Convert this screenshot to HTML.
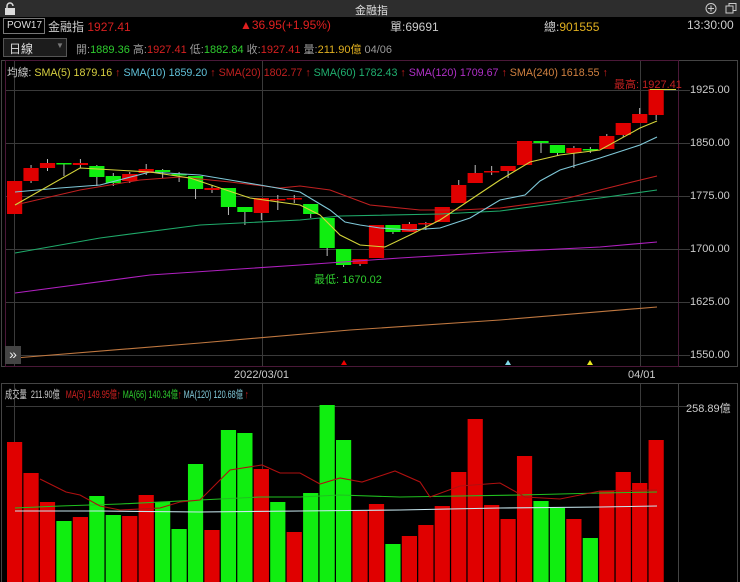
<!DOCTYPE html>
<html><head><meta charset="utf-8"><style>
body{margin:0;width:740px;height:582px;background:#000;overflow:hidden;font-family:"Liberation Sans","Noto Sans CJK TC",sans-serif;}
.t{position:absolute;white-space:nowrap;font-size:11px;}
</style></head><body>
<div style="position:absolute;left:0;top:0;width:740px;height:17px;background:#2d2d2d;"></div>
<div class="t" style="left:355px;top:2px;color:#ddd;">金融指</div>
<svg style="position:absolute;left:4px;top:2px" width="12" height="13"><path d="M3 6V4a3 3 0 0 1 6 0" stroke="#ddd" fill="none" stroke-width="1.5"/><rect x="1" y="6" width="10" height="7" fill="#ddd"/></svg>
<svg style="position:absolute;left:705px;top:2px" width="35" height="13"><circle cx="6" cy="6.5" r="5" stroke="#ccc" fill="none"/><path d="M6 3.5v6M3 6.5h6" stroke="#ccc"/><rect x="21" y="4" width="7" height="7" stroke="#ccc" fill="none"/><path d="M24 4V1.5h7v7h-3" stroke="#ccc" fill="none"/></svg>
<div style="position:absolute;left:3px;top:18px;width:40px;height:14px;border:1px solid #777;"></div>
<div class="t" style="left:7px;top:20px;color:#ddd;font-size:10px;">POW17</div>
<div class="t" style="left:48px;top:18px;font-size:12px;color:#ccc;">金融指 <span style="color:#d62020">1927.41</span></div>
<div class="t" style="left:240px;top:18px;font-size:12px;color:#e02020;">▲36.95(+1.95%)</div>
<div class="t" style="left:390px;top:18px;font-size:12px;color:#ccc;">單:69691</div>
<div class="t" style="left:544px;top:18px;font-size:12px;color:#ccc;">總:<span style="color:#e0b020">901555</span></div>
<div class="t" style="left:687px;top:18px;font-size:12px;color:#ccc;">13:30:00</div>
<div style="position:absolute;left:3px;top:38px;width:62px;height:17px;background:#1c1c1c;border:1px solid #555;"></div>
<div class="t" style="left:9px;top:40px;color:#ddd;font-size:12px;">日線</div>
<div class="t" style="left:56px;top:41px;color:#777;font-size:8px;">▼</div>
<div class="t" style="left:76px;top:41px;color:#999;font-size:11px;">開:<span style="color:#2ecc2e">1889.36</span> 高:<span style="color:#d62020">1927.41</span> 低:<span style="color:#2ecc2e">1882.84</span> 收:<span style="color:#d62020">1927.41</span> 量:<span style="color:#e0b020">211.90億</span> 04/06</div>
<svg id="s" style="position:absolute;left:0;top:0" width="740" height="582"></svg>
<div class="t" style="left:7px;top:65px;color:#ccc;font-size:10.7px;">均線: <span style="color:#d8d040">SMA(5) 1879.16</span> <span style="color:#d02020">↑</span> <span style="color:#60c0d8">SMA(10) 1859.20</span> <span style="color:#d02020">↑</span> <span style="color:#c02020">SMA(20) 1802.77</span> <span style="color:#d02020">↑</span> <span style="color:#20b070">SMA(60) 1782.43</span> <span style="color:#d02020">↑</span> <span style="color:#b030c8">SMA(120) 1709.67</span> <span style="color:#d02020">↑</span> <span style="color:#d08040">SMA(240) 1618.55</span> <span style="color:#d02020">↑</span></div>
<div class="t" style="left:614px;top:76px;color:#c02020;">最高: 1927.41</div>
<div class="t" style="left:314px;top:271px;color:#2ecc2e;">最低: 1670.02</div>
<div class="t" style="left:690px;top:84px;color:#ccc;">1925.00</div>
<div class="t" style="left:690px;top:137px;color:#ccc;">1850.00</div>
<div class="t" style="left:690px;top:190px;color:#ccc;">1775.00</div>
<div class="t" style="left:690px;top:243px;color:#ccc;">1700.00</div>
<div class="t" style="left:690px;top:296px;color:#ccc;">1625.00</div>
<div class="t" style="left:690px;top:349px;color:#ccc;">1550.00</div>
<div class="t" style="left:234px;top:369px;color:#ccc;">2022/03/01</div>
<div class="t" style="left:628px;top:369px;color:#ccc;">04/01</div>
<div class="t" style="left:5px;top:386px;color:#ccc;transform:scaleX(0.66);transform-origin:0 0;">成交量 &nbsp;211.90億 &nbsp; <span style="color:#d02020">MA(5) 149.95億↑</span> <span style="color:#2ecc2e">MA(66) 140.34億</span><span style="color:#d02020">↑</span> <span style="color:#80c8d8">MA(120) 120.68億</span> <span style="color:#d02020">↑</span></div>
<div class="t" style="left:686px;top:400px;color:#ccc;">258.89億</div>
<div style="position:absolute;left:5px;top:346px;width:16px;height:18px;background:#444;color:#eee;font-size:14px;line-height:17px;text-align:center;">»</div>
<script>
var s=document.getElementById('s'),h='';
function L(x1,y1,x2,y2,c){h+='<line x1="'+x1+'" y1="'+y1+'" x2="'+x2+'" y2="'+y2+'" stroke="'+c+'" stroke-width="1"/>';}
function R(x,y,w,hh,c){h+='<rect x="'+x+'" y="'+y+'" width="'+w+'" height="'+Math.max(hh,1.5)+'" fill="'+c+'"/>';}
function P(pts,c){h+='<polyline points="'+pts+'" fill="none" stroke="'+c+'" stroke-width="1.1"/>';}
h+='<rect x="1.5" y="60.5" width="736" height="306" fill="none" stroke="#444"/>';
h+='<rect x="5.5" y="60.5" width="673" height="306" fill="none" stroke="#4a1838"/>';
h+='<rect x="1.5" y="383.5" width="736" height="200" fill="none" stroke="#444"/>';
L(678.5,383,678.5,582,'#444');
[90,143,196,249,302,355].forEach(function(y){L(6,y+.5,690,y+.5,'#3a3a3a');});
L(6,406.5,690,406.5,'#3a3a3a');
[14.5,262.5,640.5].forEach(function(x){L(x,61,x,366,'#3a3a3a');L(x,384,x,582,'#3a3a3a');});
var G='#10ee10',Rd='#e00000';
var vol=[[442,1],[473,1],[502,1],[521,0],[517,1],[496,0],[515,0],[516,1],[495,1],[502,0],[529,0],[464,0],[530,1],[430,0],[433,0],[469,1],[502,0],[532,1],[493,0],[405,0],[440,0],[511,1],[504,1],[544,0],[536,1],[525,1],[506,1],[472,1],[419,1],[505,1],[519,1],[456,1],[501,0],[508,0],[519,1],[538,0],[491,1],[472,1],[483,1],[440,1]];
var c=[[181,214,181,214,1],[168,181,165,183,1],[163,168,159,171,1],[163,164,163,176,0],[163,165,159,168,1],[166,177,165,186,0],[176,183,173,186,0],[174,181,172,183,1],[169,173,164,175,1],[170,172,169,178,0],[174,175,172,182,0],[176,189,176,199,0],[188,190,185,193,1],[188,207,188,215,0],[207,212,207,225,0],[198,213,198,220,1],[199,200,195,210,1],[198,199,195,203,1],[204,214,204,218,0],[218,248,218,256,0],[249,265,249,267,0],[259,264,259,266,1],[225,258,225,258,1],[225,232,225,234,0],[224,232,222,232,1],[223,224,222,230,1],[207,222,207,222,1],[185,203,180,203,1],[173,183,165,183,1],[171,172,166,175,1],[166,171,166,178,1],[141,165,141,165,1],[141,143,141,153,0],[145,153,145,156,0],[148,153,146,168,1],[149,150,147,153,0],[136,149,134,149,1],[123,135,123,137,1],[114,123,108,123,1],[89,115,89,120,1]];
for(var i=0;i<40;i++){var x=7+i*16.45,w=15.2;
 R(x,vol[i][0],w,582-vol[i][0],vol[i][1]?Rd:G);
 var k=c[i],col=k[4]?Rd:G;L(x+w/2,k[2],x+w/2,k[3],'#bbb');R(x,k[0],w,k[1]-k[0],col);}
P('15,358 200,343 350,330 500,320 657,307','#c07840');
P('15,293 150,275 300,265 400,258 500,252 600,247 657,242','#b020c0');
P('15,253 100,238 200,225 300,220 340,216 440,214 500,211 560,203 600,198 657,190','#1faa6a');
P('15,205 80,190 140,180 180,177 230,182 280,188 300,186 330,190 370,205 420,210 460,210 500,208 560,200 620,185 657,176','#c02020');
P('15,192 60,188 100,185 150,172 200,175 230,180 260,185 300,192 330,210 345,222 360,225 380,228 410,230 440,228 470,218 500,200 525,195 540,181 560,170 600,158 640,145 657,137','#7fc8d8');
P('15,205 80,168 150,172 190,178 250,198 300,205 320,215 340,235 360,245 385,247 410,235 440,220 470,200 500,180 530,162 560,155 600,150 640,128 657,121','#d4d43a');
L(650,89.5,676,89.5,'#d4d43a');
P('15,508 60,506 120,504 200,500 260,497 300,497 340,495 400,497 460,496 520,495 600,493 657,492','#20c020');
P('15,511 100,511 200,512 300,511 400,510 500,508 600,507 657,506','#c8e8f0');
P('40,479 66,492 80,495 100,506 120,510 160,508 180,502 200,500 230,470 262,465 280,473 300,473 320,484 340,478 362,482 395,471 420,482 430,497 460,486 500,483 525,497 560,499 600,491 657,490','#b01010');
h+='<polygon points="341,365 347,365 344,360" fill="#e00"/><polygon points="505,365 511,365 508,360" fill="#7fd8e8"/><polygon points="587,365 593,365 590,360" fill="#e8e820"/>';
s.innerHTML=h;
</script>
</body></html>
